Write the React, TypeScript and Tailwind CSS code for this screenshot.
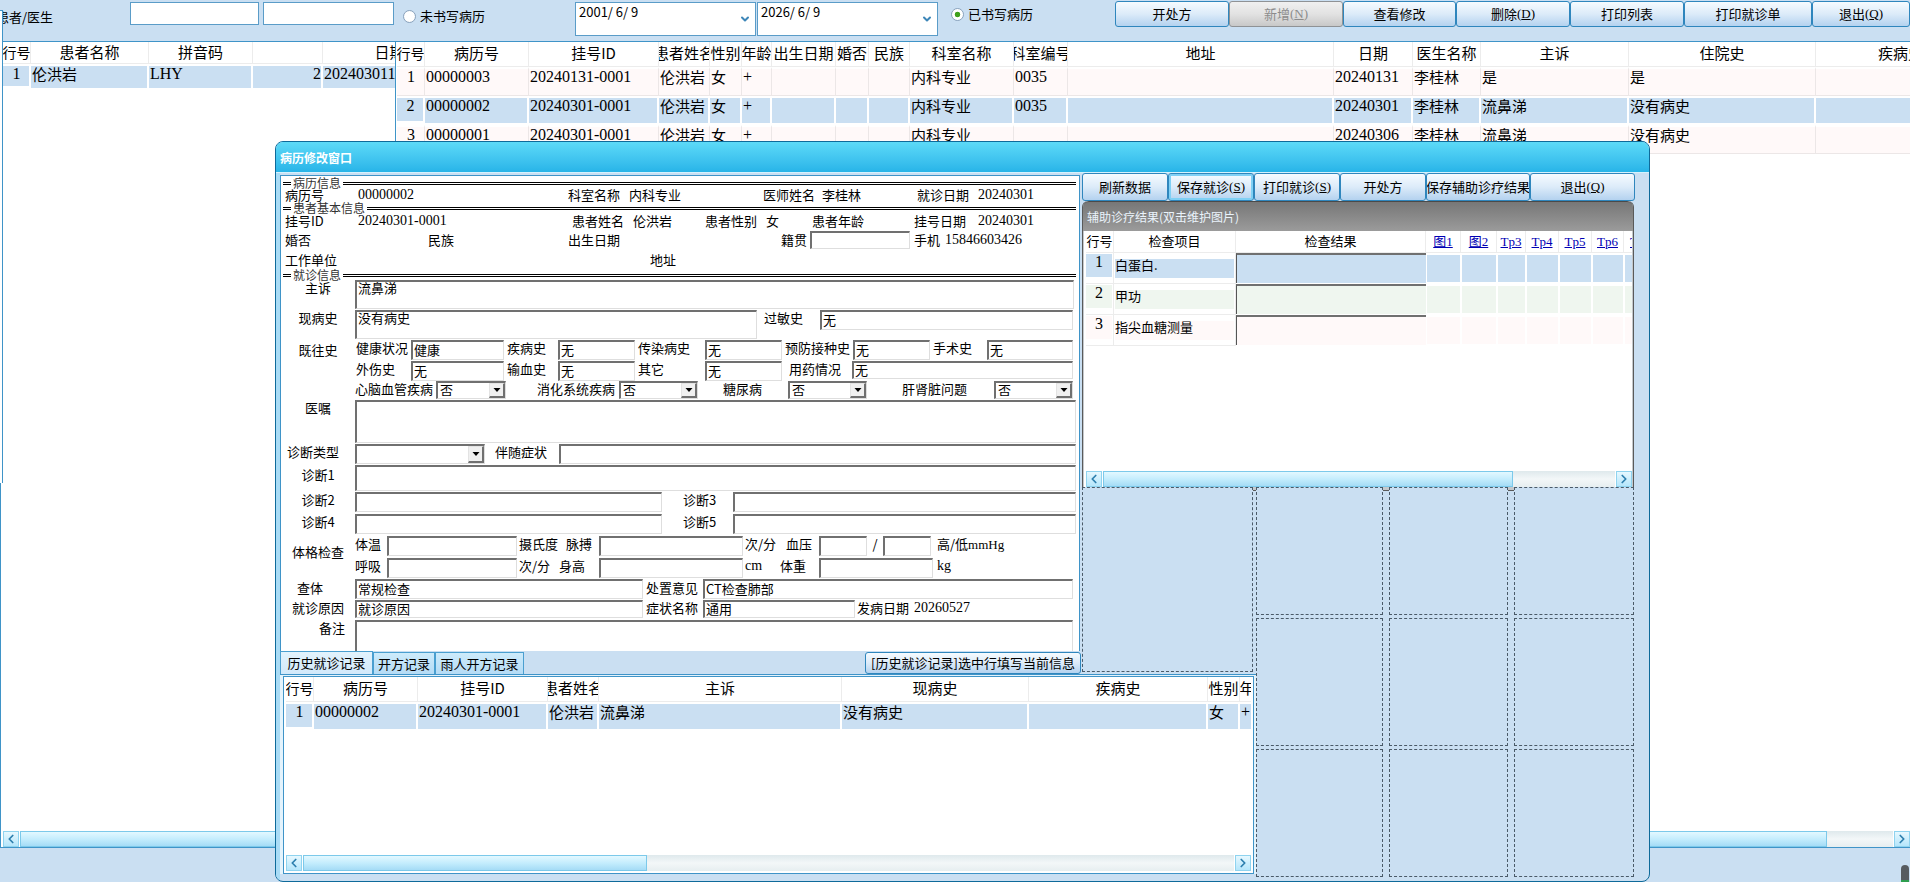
import type { ReactNode } from "react";
import { ChevronDown, ChevronLeft, ChevronRight } from "lucide-react";

const NUM = "font-['Liberation_Serif','Noto_Sans_CJK_SC',serif]";
const isLatin = (t: string) => /^[\x20-\x7e]*$/.test(t);

/* ---------- basic controls ---------- */

type BtnProps = { children: ReactNode; className?: string; disabled?: boolean; active?: boolean };

function Btn({ children, className = "", disabled, active }: BtnProps) {
  const look = disabled
    ? "border-[#8f9295] from-[#f0f0f0] via-[#e2e2e2] to-[#c8c8c8] text-[#8c8c8c]"
    : "border-[#2f86bd] from-[#f6fbff] via-[#dcebf9] to-[#b4d2ef] text-black";
  return (
    <button
      type="button"
      disabled={disabled}
      className={`flex min-w-0 items-center justify-center overflow-hidden rounded-[3px] border bg-linear-to-b text-[13px] leading-4 whitespace-nowrap ${look} ${active ? "ring-2 ring-[#7fd0f5] ring-inset" : ""} ${className}`}
    >
      {children}
    </button>
  );
}

function Key({ k }: { k: string }) {
  return (
    <span className={NUM}>
      (<u>{k}</u>)
    </span>
  );
}

const SUNKEN = "border-t-2 border-l-2 border-r border-b border-t-[#707070] border-l-[#707070] border-r-[#dedede] border-b-[#dedede] bg-white";

function Lbl({ children, htmlFor, className = "" }: { children: ReactNode; htmlFor?: string; className?: string }) {
  const cls = `block shrink-0 leading-4 whitespace-nowrap ${className}`;
  return htmlFor ? (
    <label htmlFor={htmlFor} className={cls}>
      {children}
    </label>
  ) : (
    <span className={cls}>{children}</span>
  );
}

function Val({ children, className = "" }: { children?: string; className?: string }) {
  const t = children ?? "";
  return (
    <span className={`block shrink-0 leading-4 whitespace-nowrap ${isLatin(t) ? `text-[14px] ${NUM}` : ""} ${className}`}>
      {t}
    </span>
  );
}

function Field({ id, value = "", className = "", label }: { id: string; value?: string; className?: string; label?: string }) {
  return (
    <input id={id} aria-label={label} defaultValue={value} className={`block min-w-0 rounded-none px-px pb-[3px] text-[13px] leading-[14px] outline-none ${SUNKEN} ${className}`} />
  );
}

function Area({ id, value = "", className = "" }: { id: string; value?: string; className?: string }) {
  return (
    <textarea id={id} defaultValue={value} className={`block min-w-0 resize-none overflow-hidden rounded-none px-px text-[13px] leading-3 outline-none ${SUNKEN} ${className}`} />
  );
}

function Pick({ id, value = "", className = "" }: { id: string; value?: string; className?: string }) {
  return (
    <div className={`flex min-w-0 ${SUNKEN} ${className}`}>
      <select id={id} defaultValue={value} className="min-w-0 flex-1 appearance-none bg-transparent pb-0.5 pl-0.5 text-[13px] leading-[13px] outline-none">
        <option value={value}>{value}</option>
      </select>
      <span className="pointer-events-none flex w-4 shrink-0 items-center justify-center border-t border-r-2 border-b-2 border-l border-t-[#e3e3e3] border-r-[#707070] border-b-[#707070] border-l-[#e3e3e3] bg-[#f0f0f0]">
        <svg width="8" height="4" viewBox="0 0 8 4" aria-hidden="true">
          <path d="M0.5 0h7L4 4z" fill="#000" />
        </svg>
      </span>
    </div>
  );
}

function ScrollBar({ thumb }: { thumb: string }) {
  const arrow = "flex w-4 shrink-0 items-center justify-center border border-[#8fd3ef] bg-linear-to-b from-[#e6f8ff] to-[#b5e6fb] text-[#2d7fae]";
  return (
    <div className="flex h-4 shrink-0 gap-px bg-white">
      <button type="button" aria-label="向左滚动" className={arrow}>
        <ChevronLeft size={14} strokeWidth={3} />
      </button>
      <div className="flex min-w-0 flex-1 bg-linear-to-b from-[#dfe9ec] via-[#f3f7f8] to-[#e6eef0]">
        <div className={`border border-[#7cc9ea] bg-linear-to-b from-[#e3f8ff] via-[#c4edfd] to-[#a5dcf6] ${thumb}`} />
      </div>
      <button type="button" aria-label="向右滚动" className={arrow}>
        <ChevronRight size={14} strokeWidth={3} />
      </button>
    </div>
  );
}

/* ---------- data grids ---------- */

type Col = { title: string; w: string; right?: boolean };

type GridProps = {
  cols: Col[];
  rows: string[][];
  selected: number;
  headH: string;
  rowH: string;
  className: string;
};

function DataGrid({ cols, rows, selected, headH, rowH, className }: GridProps) {
  return (
    <table className={`table-fixed border-separate border-spacing-0 text-[15px] ${className}`}>
      <colgroup>
        {cols.map((c, i) => (
          <col key={i} className={c.w} />
        ))}
      </colgroup>
      <thead>
        <tr className={headH}>
          {cols.map((c, i) => (
            <th key={i} scope="col" className={`overflow-hidden border-r border-b border-[#ececec] p-0 pb-0.5 font-normal ${i === 0 ? "text-[14px]" : ""}`}>
              <div className="flex justify-center leading-[18px] whitespace-nowrap">{c.title}</div>
            </th>
          ))}
        </tr>
      </thead>
      <tbody>
        {rows.map((r, ri) => {
          const on = ri === selected;
          return (
            <tr key={ri} className={rowH}>
              {r.map((t, ci) => (
                <td
                  key={ci}
                  className={`overflow-hidden p-0 align-top ${
                    on
                      ? ci === 0
                        ? "border-t-2 border-r-2 border-b-4 border-white bg-[#cadff2]"
                        : "border-t-2 border-r-2 border-b-2 border-white bg-[#cadff2]"
                      : "border-t-2 border-r border-b border-t-white border-r-[#ece7e7] border-b-[#ece7e7] bg-[#fff9f9]"
                  }`}
                >
                  <div
                    className={`flex pl-px leading-4 whitespace-nowrap ${isLatin(t) ? `text-[16px] ${NUM}` : ""} ${
                      ci === 0 ? "justify-center" : cols[ci].right ? "justify-end" : ""
                    }`}
                  >
                    {t}
                  </div>
                </td>
              ))}
            </tr>
          );
        })}
      </tbody>
    </table>
  );
}

const patientCols: Col[] = [
  { title: "行号", w: "w-[28px]" },
  { title: "患者名称", w: "w-[118px]" },
  { title: "拼音码", w: "w-[104px]" },
  { title: "", w: "w-[70px]", right: true },
  { title: "日期", w: "w-[134px]" },
];

const visitCols: Col[] = [
  { title: "行号", w: "w-[28px]" },
  { title: "病历号", w: "w-[104px]" },
  { title: "挂号ID", w: "w-[130px]" },
  { title: "患者姓名", w: "w-[51px]" },
  { title: "性别", w: "w-[32px]" },
  { title: "年龄", w: "w-[30px]" },
  { title: "出生日期", w: "w-[64px]" },
  { title: "婚否", w: "w-[33px]" },
  { title: "民族", w: "w-[41px]" },
  { title: "科室名称", w: "w-[104px]" },
  { title: "科室编号", w: "w-[54px]" },
  { title: "地址", w: "w-[266px]" },
  { title: "日期", w: "w-[79px]" },
  { title: "医生名称", w: "w-[68px]" },
  { title: "主诉", w: "w-[148px]" },
  { title: "住院史", w: "w-[187px]" },
  { title: "疾病史", w: "w-[170px]" },
];

const visitRows = [
  ["1", "00000003", "20240131-0001", "伦洪岩", "女", "+", "", "", "", "内科专业", "0035", "", "20240131", "李桂林", "是", "是", ""],
  ["2", "00000002", "20240301-0001", "伦洪岩", "女", "+", "", "", "", "内科专业", "0035", "", "20240301", "李桂林", "流鼻涕", "没有病史", ""],
  ["3", "00000001", "20240301-0001", "伦洪岩", "女", "+", "", "", "", "内科专业", "", "", "20240306", "李桂林", "流鼻涕", "没有病史", ""],
];

const historyCols: Col[] = [
  { title: "行号", w: "w-[28px]" },
  { title: "病历号", w: "w-[104px]" },
  { title: "挂号ID", w: "w-[130px]" },
  { title: "患者姓名", w: "w-[51px]" },
  { title: "主诉", w: "w-[243px]" },
  { title: "现病史", w: "w-[187px]" },
  { title: "疾病史", w: "w-[179px]" },
  { title: "性别", w: "w-[32px]" },
  { title: "年龄", w: "w-[30px]" },
];

/* ---------- toolbar ---------- */

function DateBox({ value, label }: { value: string; label: string }) {
  return (
    <div className="flex h-[34px] w-[181px] border border-[#5a9cc8] bg-white">
      <input aria-label={label} defaultValue={value} className="h-[18px] min-w-0 flex-1 pl-[3px] text-[13px] leading-[18px] outline-none" />
      <button type="button" aria-label="选择日期" className="flex w-5 items-center justify-center text-[#3d86b8]">
        <ChevronDown size={12} strokeWidth={4} />
      </button>
    </div>
  );
}

function Radio({ id, on, children }: { id: string; on?: boolean; children: string }) {
  return (
    <div className="flex items-center gap-1 leading-4">
      <input
        type="radio"
        name="written"
        id={id}
        defaultChecked={on}
        className="size-[13px] appearance-none rounded-full border border-[#8aa3bd] bg-[radial-gradient(circle,#ffffff_60%,#dfe6ee_100%)] checked:bg-[radial-gradient(circle,#3fa01c_32%,#ffffff_40%)]"
      />
      <label htmlFor={id} className="whitespace-nowrap">
        {children}
      </label>
    </div>
  );
}

function Toolbar() {
  return (
    <header className="flex h-[41px] shrink-0 items-start overflow-hidden text-[13px]">
      <div className="flex w-[130px] shrink-0 overflow-hidden pt-2">
        <label htmlFor="patient" className="-ml-1 leading-[18px] whitespace-nowrap">
          患者/医生
        </label>
      </div>
      <div className="flex shrink-0 gap-1 pt-0.5">
        <input id="patient" className="h-[23px] w-[129px] border border-[#5a9cc8] bg-white px-1 outline-none" />
        <input id="doctor" aria-label="医生" className="h-[23px] w-[131px] border border-[#5a9cc8] bg-white px-1 outline-none" />
      </div>
      <div className="w-[181px] shrink-0 pt-2 pl-[9px]">
        <Radio id="unwritten">未书写病历</Radio>
      </div>
      <div className="flex shrink-0 gap-px pt-0.5">
        <DateBox value="2001/ 6/ 9" label="开始日期" />
        <DateBox value="2026/ 6/ 9" label="结束日期" />
      </div>
      <div className="shrink-0 pt-[6px] pl-[13px]">
        <Radio id="written" on>
          已书写病历
        </Radio>
      </div>
      <div className="ml-auto flex h-[27px] shrink-0 pt-px">
        <Btn className="w-[114px]">开处方</Btn>
        <Btn className="w-[114px]" disabled>
          新增
          <Key k="N" />
        </Btn>
        <Btn className="w-[113px]">查看修改</Btn>
        <Btn className="w-[114px]">
          删除
          <Key k="D" />
        </Btn>
        <Btn className="w-[114px]">打印列表</Btn>
        <Btn className="w-[128px]">打印就诊单</Btn>
        <Btn className="w-[98px]">
          退出
          <Key k="Q" />
        </Btn>
      </div>
    </header>
  );
}

/* ---------- record form ---------- */

function Section({ title, className }: { title: string; className: string }) {
  return (
    <div className={`flex shrink-0 items-center gap-0.5 pl-0.5 ${className}`}>
      <span className="h-[3px] w-2 shrink-0 border-y border-black" />
      <h2 className="text-[12px] leading-3 whitespace-nowrap text-[#333]">{title}</h2>
      <span className="h-[3px] flex-1 border-y border-black" />
    </div>
  );
}

function RowLabel({ children, htmlFor, className = "text-center" }: { children: string; htmlFor?: string; className?: string }) {
  return (
    <Lbl htmlFor={htmlFor} className={`w-[74px] ${className}`}>
      {children}
    </Lbl>
  );
}

function RecordForm() {
  return (
    <form className="mr-0.5 flex min-h-0 flex-1 flex-col overflow-hidden border-t border-r border-l border-[#3f94c8] bg-white pt-px pr-[3px] text-[13px]">
      <Section title="病历信息" className="h-3" />
      <div className="flex h-3 shrink-0 items-center">
        <Lbl className="w-[77px] pl-1">病历号</Lbl>
        <Val className="w-[210px]">00000002</Val>
        <Lbl className="w-[61px]">科室名称</Lbl>
        <Val className="w-[134px]">内科专业</Val>
        <Lbl className="w-[59px]">医师姓名</Lbl>
        <Val className="w-[95px]">李桂林</Val>
        <Lbl className="w-[61px]">就诊日期</Lbl>
        <Val>20240301</Val>
      </div>
      <Section title="患者基本信息" className="h-[14px]" />
      <div className="flex h-3 shrink-0 items-center">
        <Lbl className="w-[77px] pl-1">挂号ID</Lbl>
        <Val className="w-[214px]">20240301-0001</Val>
        <Lbl className="w-[61px]">患者姓名</Lbl>
        <Val className="w-[72px]">伦洪岩</Val>
        <Lbl className="w-[61px]">患者性别</Lbl>
        <Val className="w-[46px]">女</Val>
        <Lbl className="w-[102px]">患者年龄</Lbl>
        <Lbl className="w-[64px]">挂号日期</Lbl>
        <Val>20240301</Val>
      </div>
      <div className="flex h-[26px] shrink-0 items-center">
        <Lbl className="w-[147px] pl-1">婚否</Lbl>
        <Lbl className="w-[140px]">民族</Lbl>
        <Lbl className="w-[213px]">出生日期</Lbl>
        <Lbl htmlFor="native" className="w-[29px]">
          籍贯
        </Lbl>
        <Field id="native" className="h-[18px] w-[100px]" />
        <Lbl className="w-[35px] pl-1">手机</Lbl>
        <Val>15846603426</Val>
      </div>
      <div className="flex h-[13px] shrink-0 items-center">
        <Lbl className="w-[369px] pl-1">工作单位</Lbl>
        <Lbl>地址</Lbl>
      </div>
      <Section title="就诊信息" className="mt-1 h-2.5" />

      <div className="flex h-[30px] shrink-0 items-start">
        <RowLabel htmlFor="complaint">主诉</RowLabel>
        <Area id="complaint" value="流鼻涕" className="mr-0.5 h-[29px] flex-1" />
      </div>
      <div className="flex h-[30px] shrink-0 items-start">
        <RowLabel htmlFor="present">现病史</RowLabel>
        <Area id="present" value="没有病史" className="h-[29px] w-[402px]" />
        <Lbl htmlFor="allergy" className="w-[63px] pl-[7px]">
          过敏史
        </Lbl>
        <Field id="allergy" value="无" className="mr-[3px] h-5 flex-1" />
      </div>

      <div className="flex shrink-0 items-start">
        <RowLabel className="pt-0.5 text-center">既往史</RowLabel>
        <div className="flex min-w-0 flex-1 flex-col pr-[3px]">
          <div className="flex h-[21px] items-start">
            <Lbl htmlFor="health" className="w-[56px] pl-px">健康状况</Lbl>
            <Field id="health" value="健康" className="h-5 w-[93px]" />
            <Lbl htmlFor="disease" className="w-[54px] pl-[3px]">疾病史</Lbl>
            <Field id="disease" value="无" className="h-5 w-[77px]" />
            <Lbl htmlFor="infect" className="w-[70px] pl-[3px]">传染病史</Lbl>
            <Field id="infect" value="无" className="h-5 w-[77px]" />
            <Lbl htmlFor="vaccine" className="w-[71px] pl-[3px]">预防接种史</Lbl>
            <Field id="vaccine" value="无" className="h-5 w-[77px]" />
            <Lbl htmlFor="surgery" className="w-[57px] pl-[3px]">手术史</Lbl>
            <Field id="surgery" value="无" className="h-5 flex-1" />
          </div>
          <div className="flex h-5 items-start">
            <Lbl htmlFor="trauma" className="w-[56px] pl-px">外伤史</Lbl>
            <Field id="trauma" value="无" className="h-5 w-[93px]" />
            <Lbl htmlFor="transfusion" className="w-[54px] pl-[3px]">输血史</Lbl>
            <Field id="transfusion" value="无" className="h-5 w-[77px]" />
            <Lbl htmlFor="other" className="w-[70px] pl-[3px]">其它</Lbl>
            <Field id="other" value="无" className="h-5 w-[77px]" />
            <Lbl htmlFor="medication" className="w-[70px] pl-[7px]">用药情况</Lbl>
            <Field id="medication" value="无" className="h-[18px] flex-1" />
          </div>
          <div className="flex h-[19px] items-start">
            <Lbl htmlFor="cardio" className="w-[81px]">心脑血管疾病</Lbl>
            <Pick id="cardio" value="否" className="h-[18px] w-[70px]" />
            <Lbl htmlFor="digest" className="w-[113px] pl-[31px]">消化系统疾病</Lbl>
            <Pick id="digest" value="否" className="h-[18px] w-[79px]" />
            <Lbl htmlFor="diabetes" className="w-[90px] pl-[25px]">糖尿病</Lbl>
            <Pick id="diabetes" value="否" className="h-[18px] w-[79px]" />
            <Lbl htmlFor="liver" className="w-[127px] pl-[35px]">肝肾脏问题</Lbl>
            <Pick id="liver" value="否" className="h-[18px] flex-1" />
          </div>
        </div>
      </div>

      <div className="flex h-11 shrink-0 items-start">
        <RowLabel htmlFor="advice">医嘱</RowLabel>
        <Area id="advice" className="h-[43px] flex-1" />
      </div>
      <div className="flex h-[21px] shrink-0 items-start">
        <RowLabel htmlFor="diagtype" className="pl-1.5">诊断类型</RowLabel>
        <Pick id="diagtype" className="h-5 w-[130px]" />
        <Lbl htmlFor="symptom" className="w-[74px] pl-2.5">伴随症状</Lbl>
        <Field id="symptom" className="h-5 flex-1" />
      </div>
      <div className="flex h-[27px] shrink-0 items-start">
        <RowLabel htmlFor="diag1" className="pt-0.5 text-center">诊断1</RowLabel>
        <Field id="diag1" className="h-[26px] flex-1" />
      </div>
      <div className="flex h-[22px] shrink-0 items-start">
        <RowLabel htmlFor="diag2">诊断2</RowLabel>
        <Field id="diag2" className="h-5 w-[307px]" />
        <Lbl htmlFor="diag3" className="w-[71px] pl-[21px]">诊断3</Lbl>
        <Field id="diag3" className="h-5 flex-1" />
      </div>
      <div className="flex h-[22px] shrink-0 items-start">
        <RowLabel htmlFor="diag4">诊断4</RowLabel>
        <Field id="diag4" className="h-5 w-[307px]" />
        <Lbl htmlFor="diag5" className="w-[71px] pl-[21px]">诊断5</Lbl>
        <Field id="diag5" className="h-5 flex-1" />
      </div>

      <div className="flex shrink-0 items-start">
        <RowLabel className="pt-2 text-center">体格检查</RowLabel>
        <div className="flex min-w-0 flex-1 flex-col">
          <div className="flex h-[22px] items-start">
            <Lbl htmlFor="temp" className="w-[32px]">体温</Lbl>
            <Field id="temp" className="h-5 w-[130px]" />
            <Lbl className="w-[49px] pl-0.5">摄氏度</Lbl>
            <Lbl htmlFor="pulse" className="w-[33px]">脉搏</Lbl>
            <Field id="pulse" className="h-5 w-[144px]" />
            <Lbl className="w-[43px] pl-0.5">次/分</Lbl>
            <Lbl htmlFor="bphigh" className="w-[33px]">血压</Lbl>
            <Field id="bphigh" className="h-5 w-12" />
            <Lbl className="w-4 text-center">/</Lbl>
            <Field id="bplow" label="低压" className="h-5 w-12" />
            <Lbl className="pl-1.5">
              高/低<span className={NUM}>mmHg</span>
            </Lbl>
          </div>
          <div className="flex h-[21px] items-start">
            <Lbl htmlFor="breath" className="w-[32px]">呼吸</Lbl>
            <Field id="breath" className="h-5 w-[130px]" />
            <Lbl className="w-[42px] pl-0.5">次/分</Lbl>
            <Lbl htmlFor="height" className="w-[40px]">身高</Lbl>
            <Field id="height" className="h-5 w-[144px]" />
            <Val className="w-[37px] pl-0.5">cm</Val>
            <Lbl htmlFor="weight" className="w-[39px]">体重</Lbl>
            <Field id="weight" className="h-5 w-[114px]" />
            <Val className="pl-1">kg</Val>
          </div>
        </div>
      </div>

      <div className="flex h-[21px] shrink-0 items-start pr-[3px]">
        <RowLabel htmlFor="exam" className="pt-px pr-4 text-center">查体</RowLabel>
        <Field id="exam" value="常规检查" className="h-5 w-[288px]" />
        <Lbl htmlFor="opinion" className="w-[60px] pt-px pl-[3px]">处置意见</Lbl>
        <Field id="opinion" value="CT检查肺部" className="h-5 flex-1" />
      </div>
      <div className="flex h-5 shrink-0 items-start">
        <RowLabel htmlFor="reason">就诊原因</RowLabel>
        <Field id="reason" value="就诊原因" className="h-[18px] w-[288px]" />
        <Lbl htmlFor="symname" className="w-[60px] pl-[3px]">症状名称</Lbl>
        <Field id="symname" value="通用" className="h-[18px] w-[152px]" />
        <Lbl className="w-[59px] pl-0.5">发病日期</Lbl>
        <Val>20260527</Val>
      </div>
      <div className="flex min-h-0 flex-1 items-start pr-[3px]">
        <RowLabel htmlFor="remark" className="pr-2.5 text-right">备注</RowLabel>
        <Area id="remark" className="h-8 flex-1" />
      </div>
    </form>
  );
}

function Tabs() {
  const tab = "h-[22px] border border-b-0 border-[#4a9fd0] bg-linear-to-b from-[#cdebfb] to-[#b4dbf5] leading-5 whitespace-nowrap";
  return (
    <div className="flex h-[23px] shrink-0 items-end text-[13px]" role="tablist">
      <button type="button" role="tab" aria-selected="true" className="h-[23px] w-[93px] border border-b-0 border-[#4a9fd0] bg-linear-to-b from-[#e2f3fd] to-[#d2e9fa] leading-5 whitespace-nowrap">
        历史就诊记录
      </button>
      <button type="button" role="tab" className={`w-[62px] ${tab}`}>
        开方记录
      </button>
      <button type="button" role="tab" className={`w-[89px] ${tab}`}>
        雨人开方记录
      </button>
      <Btn className="mr-px ml-auto h-[22px] w-[216px]">[历史就诊记录]选中行填写当前信息</Btn>
    </div>
  );
}

/* ---------- auxiliary results ---------- */

const pics = ["图1", "图2", "Tp3", "Tp4", "Tp5", "Tp6", "Tp7"];
const auxRows = [
  { name: "白蛋白.", bg: "bg-[#cadff2]" },
  { name: "甲功", bg: "bg-[#eff6ef]" },
  { name: "指尖血糖测量", bg: "bg-[#fff9f9]" },
];

function AuxWindow() {
  return (
    <section className="flex min-h-0 flex-1 flex-col overflow-hidden rounded-t-md border-x border-b border-[#5a5a5a] bg-[#c4c8cc] pb-[3px]">
      <h2 className="flex h-[30px] shrink-0 items-center rounded-t-md border-t border-[#4a4a4a] bg-linear-to-b from-[#777] to-[#9b9b9b] pt-px pl-1 text-[12px] text-[#eaf3fb]">
        辅助诊疗结果(双击维护图片)
      </h2>
      <div className="mx-px flex min-h-0 flex-1 flex-col overflow-hidden bg-white pl-0.5">
        <div className="min-h-0 flex-1 overflow-hidden">
          <table className="w-[572px] table-fixed border-separate border-spacing-0 text-[13px]">
            <colgroup>
              <col className="w-[28px]" />
              <col className="w-[122px]" />
              <col className="w-[190px]" />
              <col className="w-[35px]" />
              <col className="w-[36px]" />
              <col className="w-[29px]" />
              <col className="w-[33px]" />
              <col className="w-[33px]" />
              <col className="w-[32px]" />
              <col className="w-[34px]" />
            </colgroup>
            <thead>
              <tr className="h-[22px]">
                {["行号", "检查项目", "检查结果"].map((t) => (
                  <th key={t} scope="col" className="border-r border-b border-[#ececec] p-0 pb-0.5 leading-4 font-normal whitespace-nowrap">
                    {t}
                  </th>
                ))}
                {pics.map((p) => (
                  <th key={p} scope="col" className="overflow-hidden border-r border-b border-[#ececec] p-0 leading-4 font-normal whitespace-nowrap">
                    <a href="#pic" className={`text-[#0000b4] underline ${NUM}`}>
                      {p}
                    </a>
                  </th>
                ))}
              </tr>
            </thead>
            <tbody>
              {auxRows.map((r, i) => (
                <tr key={r.name} className="h-[31px]">
                  <td className="border-r border-b border-[#ececec] p-0 align-top">
                    <div className={`mt-px mr-px h-[23px] text-center text-[16px] leading-4 ${NUM} ${r.bg}`}>{i + 1}</div>
                  </td>
                  <td className="border-r border-b border-[#ececec] p-0 align-top">
                    <div className={`mx-px mt-1.5 h-[19px] leading-3 whitespace-nowrap ${r.bg}`}>{r.name}</div>
                  </td>
                  <td className="p-0 align-top">
                    <input aria-label={`${r.name}检查结果`} className={`block h-[30px] w-full border-t-2 border-l border-t-[#707070] border-l-[#555] px-1 outline-none ${r.bg}`} />
                  </td>
                  {pics.map((p) => (
                    <td key={p} className={`border-x border-t-2 border-b-2 border-white p-0 ${r.bg}`} />
                  ))}
                </tr>
              ))}
            </tbody>
          </table>
        </div>
        <ScrollBar thumb="w-[80%]" />
      </div>
    </section>
  );
}

const SLOT = "border border-dashed border-[#4a5a68] bg-[#cadff2]";

/* ---------- dialog ---------- */

function RecordDialog() {
  return (
    <div
      role="dialog"
      aria-label="病历修改窗口"
      className="absolute top-[141px] right-[260px] bottom-0 left-[275px] flex flex-col overflow-hidden rounded-lg border border-[#0e6a9a] bg-[#cadff2]"
    >
      <h1 className="flex h-[31px] shrink-0 items-center border-b border-[#d5f2fd] bg-linear-to-b from-[#5cdaf8] to-[#27b4e8] pt-0.5 pl-1 text-[12px] font-bold text-white">
        病历修改窗口
      </h1>
      <div className="grid min-h-0 flex-1 grid-cols-[minmax(0,802fr)_minmax(0,174fr)_minmax(0,379fr)] grid-rows-[314px_187px_minmax(0,1fr)] border-l-4 border-[#a9dcf6] pr-3.5 pb-1">
        <div className="row-span-2 flex min-h-0 flex-col pt-0.5">
          <RecordForm />
          <Tabs />
        </div>
        <div className="col-span-2 flex min-h-0 flex-col overflow-visible">
          <div className="flex h-7 shrink-0">
            <Btn className="w-[86px]">刷新数据</Btn>
            <Btn className="w-[86px]" active>
              保存就诊
              <Key k="S" />
            </Btn>
            <Btn className="w-[86px]">
              打印就诊
              <Key k="S" />
            </Btn>
            <Btn className="w-[86px]">开处方</Btn>
            <Btn className="w-[104px]">保存辅助诊疗结果</Btn>
            <Btn className="flex-1">
              退出
              <Key k="Q" />
            </Btn>
          </div>
          <div className="-mb-1 flex min-h-0 flex-1 flex-col pr-px">
            <AuxWindow />
          </div>
        </div>
        <div className={`relative mr-[3px] mb-0.5 ${SLOT}`} />
        <div className="relative row-span-2 grid grid-cols-[minmax(0,126fr)_minmax(0,119fr)_minmax(0,119fr)] grid-rows-3 gap-x-1.5 gap-y-[3px] pr-px">
          {Array.from({ length: 9 }, (_, i) => (
            <div key={i} className={SLOT} />
          ))}
        </div>
        <div className="col-span-2 mb-[3px] flex min-h-0 flex-col border-t border-[#3f94c8] bg-[#e4f3fc] pt-px pr-0.5 pl-[3px]">
          <div className="flex min-h-0 flex-1 flex-col overflow-hidden border border-[#3f94c8] bg-white px-0.5 pb-0.5">
            <div className="min-h-0 flex-1 overflow-hidden">
              <DataGrid
                cols={historyCols}
                rows={[["1", "00000002", "20240301-0001", "伦洪岩", "流鼻涕", "没有病史", "", "女", "+"]]}
                selected={0}
                headH="h-[25px]"
                rowH="h-[29px]"
                className="w-[984px]"
              />
            </div>
            <ScrollBar thumb="w-[37%]" />
          </div>
        </div>
      </div>
    </div>
  );
}

export default function App() {
  return (
    <div className="relative flex h-screen min-h-[882px] flex-col overflow-hidden bg-[#cadff2] font-['Noto_Sans_CJK_SC',sans-serif] text-black">
      <Toolbar />
      <main className="mb-[34px] flex min-h-0 flex-1 flex-col border-y border-l border-[#3f94c8] bg-white">
        <div className="flex min-h-0 flex-1">
          <div className="w-[395px] shrink-0 overflow-hidden border-r border-[#3f94c8] pl-0.5">
            <DataGrid
              cols={patientCols}
              rows={[["1", "伦洪岩", "LHY", "2", "2024030111"]]}
              selected={0}
              headH="h-[22px]"
              rowH="h-[26px]"
              className="w-[454px]"
            />
          </div>
          <div className="min-w-0 flex-1 overflow-hidden pl-px">
            <DataGrid cols={visitCols} rows={visitRows} selected={1} headH="h-[25px]" rowH="h-[29px]" className="w-[1589px]" />
          </div>
        </div>
        <div className="flex flex-col pl-0.5">
          <ScrollBar thumb="w-[96.5%]" />
        </div>
      </main>
      <div className="absolute top-2.5 left-0 h-[473px] w-[3px] border-t border-r border-[#3f94c8] bg-white" />
      <div className="absolute right-px bottom-0 h-[17px] w-2 rounded-t-md border-b-2 border-[#2f9e4f] bg-[#565b60]" />
      <RecordDialog />
    </div>
  );
}
